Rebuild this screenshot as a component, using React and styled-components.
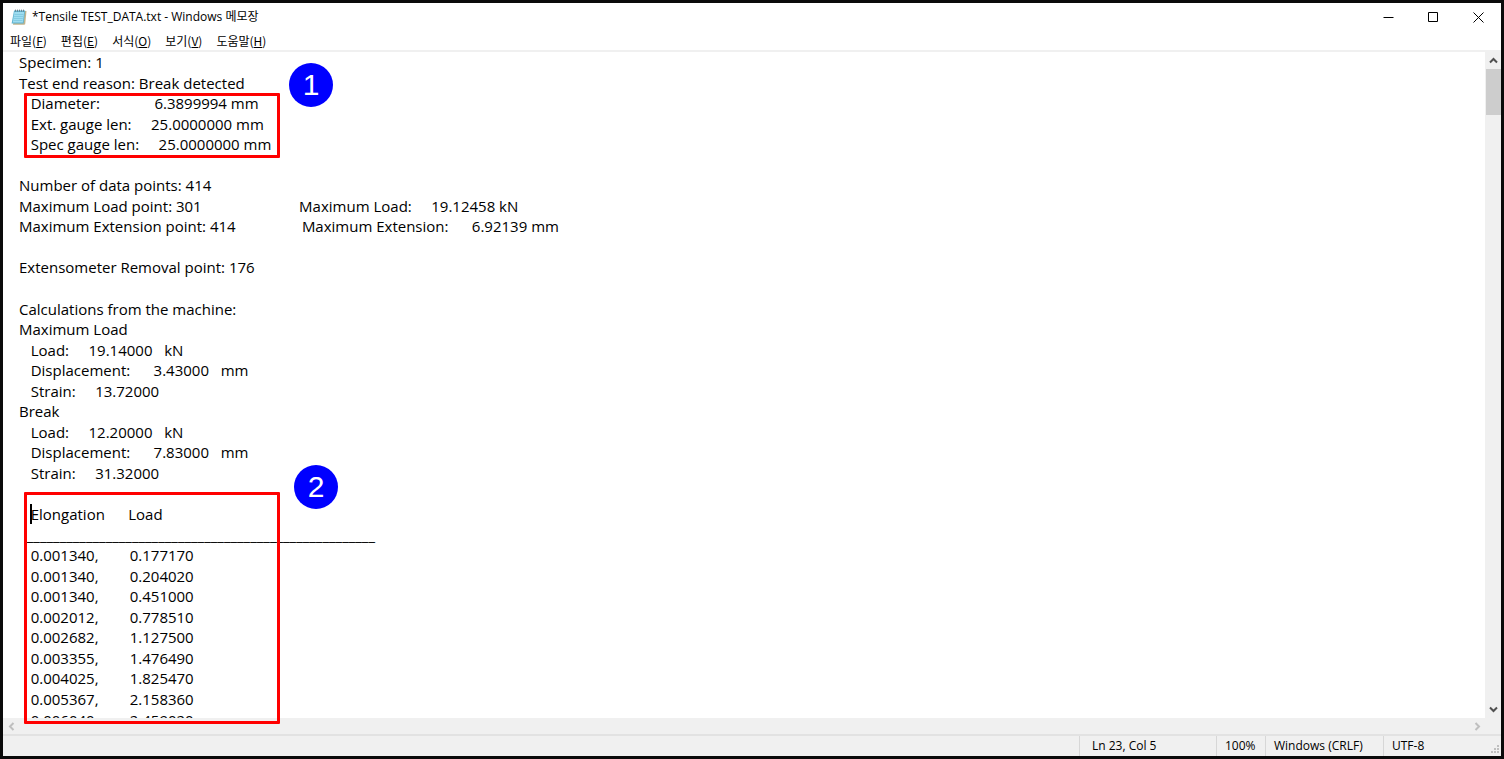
import React, { useState } from 'react';
import styled, { createGlobalStyle } from 'styled-components';

const GlobalStyle = createGlobalStyle`
	* {
		box-sizing: border-box;
	}

	body {
		margin: 0;
		font-family: 'Open Sans', 'Noto Sans CJK KR', sans-serif;
		font-size: 12px;
		color: #000;
	}

	button,
	textarea {
		font: inherit;
		color: inherit;
		border: none;
		margin: 0;
		padding: 0;
		background: none;
	}
`;

const Window = styled.div`
	position: relative;
	display: flex;
	flex-direction: column;
	height: 100vh;
	border: 3px solid #0a0a0a;
	background-color: #fff;
	overflow: hidden;
`;

const TitleBar = styled.header`
	display: flex;
	align-items: center;
	height: 28px;
	padding-left: 8px;
`;

const Title = styled.h1`
	flex: 1;
	margin: 0 0 0 5px;
	font-size: 12px;
	line-height: 16px;
	font-weight: 400;
`;

const WindowButton = styled.button`
	display: flex;
	align-items: center;
	justify-content: center;
	width: 45px;
	height: 28px;
`;

const MenuBar = styled.nav`
	display: flex;
	align-items: center;
	gap: 14px;
	height: 19px;
	padding-left: 7px;
	font-family: 'Noto Sans CJK KR', sans-serif;
`;

const MenuButton = styled.button`
	line-height: 16px;
	white-space: nowrap;
`;

const Main = styled.main`
	flex: 1;
	display: grid;
	grid-template-columns: 1fr 16px;
	grid-template-rows: 1fr 16px;
	min-height: 0;
	border-top: 2px solid #f0f0f0;
	background-color: #f0f0f0;
`;

const Editor = styled.textarea`
	width: 100%;
	height: 100%;
	padding: 0 0 0 16px;
	outline: none;
	resize: none;
	overflow: hidden;
	white-space: pre;
	background-color: #fff;
	font-size: 15px;
	line-height: 1.37;
`;

const VerticalBar = styled.div`
	display: flex;
	flex-direction: column;
	align-items: center;
`;

const HorizontalBar = styled.div`
	display: flex;
	justify-content: space-between;
`;

const ScrollButton = styled.button`
	display: flex;
	align-items: center;
	justify-content: center;
	width: 16px;
	height: 17px;
	color: ${(props) => (props.disabled ? '#bfbfbf' : '#505050')};
`;

const Thumb = styled.div`
	width: 15px;
	height: 46px;
	margin-bottom: auto;
	background-color: #cdcdcd;
`;

const StatusBar = styled.footer`
	position: relative;
	display: flex;
	justify-content: flex-end;
	height: 22px;
	border-top: 2px solid #e2e2e2;
	background-color: #f0f0f0;
`;

const StatusCell = styled.span`
	width: ${(props) => props.$width}px;
	padding-left: ${(props) => props.$indent || 8}px;
	border-left: 1px solid #d7d7d7;
	line-height: 20px;
	white-space: nowrap;
`;

const Grip = styled.svg`
	position: absolute;
	right: 1px;
	bottom: 2px;
`;

const Caret = styled.span`
	position: absolute;
	left: 27px;
	top: 501px;
	width: 2px;
	height: 20px;
	background-color: #000;
`;

const Highlight = styled.div`
	position: absolute;
	left: 21px;
	top: ${(props) => props.$top}px;
	width: 256px;
	height: ${(props) => props.$height}px;
	border: 3px solid #f00;
	border-radius: 1px;
	pointer-events: none;
`;

const Marker = styled.div`
	position: absolute;
	left: ${(props) => props.$left}px;
	top: ${(props) => props.$top}px;
	width: 44px;
	height: 44px;
	border-radius: 50%;
	background-color: #00f;
	color: #fff;
	font-family: 'Liberation Sans', sans-serif;
	font-size: 30px;
	line-height: 44px;
	text-align: center;
`;

const menus = [
	{ label: '파일', mnemonic: 'F' },
	{ label: '편집', mnemonic: 'E' },
	{ label: '서식', mnemonic: 'O' },
	{ label: '보기', mnemonic: 'V' },
	{ label: '도움말', mnemonic: 'H' },
];

const fileText = [
	'Specimen: 1',
	'Test end reason: Break detected',
	'   Diameter:              6.3899994 mm',
	'   Ext. gauge len:     25.0000000 mm',
	'   Spec gauge len:     25.0000000 mm',
	'',
	'Number of data points: 414',
	'Maximum Load point: 301                         Maximum Load:     19.12458 kN',
	'Maximum Extension point: 414                 Maximum Extension:      6.92139 mm',
	'',
	'Extensometer Removal point: 176',
	'',
	'Calculations from the machine:',
	'Maximum Load',
	'   Load:     19.14000   kN',
	'   Displacement:      3.43000   mm',
	'   Strain:     13.72000',
	'Break',
	'   Load:     12.20000   kN',
	'   Displacement:      7.83000   mm',
	'   Strain:     31.32000',
	'',
	'   Elongation      Load',
	'  ' + '_'.repeat(53),
	'   0.001340,        0.177170',
	'   0.001340,        0.204020',
	'   0.001340,        0.451000',
	'   0.002012,        0.778510',
	'   0.002682,        1.127500',
	'   0.003355,        1.476490',
	'   0.004025,        1.825470',
	'   0.005367,        2.158360',
	'   0.006040,        2.459020',
].join('\n');

const NotepadIcon = () => (
	<svg width='16' height='16' viewBox='0 0 16 16' aria-hidden='true'>
		<path d='M4 2h11.5l-1.3 13.2-1 .6H2z' fill='#c2b48d' />
		<path d='M3 1.5h11.2L12.6 14.6H.6z' fill='#5fb3d0' />
		<path d='M3.4 3h9.8L11.9 13.6H1.8z' fill='#9ddcf0' />
		<path
			d='M3.4 5.5h9M3.1 7.5h9M2.8 9.5h9M2.4 11.5h9'
			stroke='#72bfd8'
			strokeWidth='0.6'
		/>
		<path
			d='M4.5 .6v2M6.5 .6v2M8.5 .6v2M10.5 .6v2M12.5 .6v2'
			stroke='#5d6f78'
			strokeWidth='0.8'
		/>
	</svg>
);

const Arrow = ({ d }) => (
	<svg width='9' height='9' viewBox='0 0 9 9' aria-hidden='true'>
		<path d={d} fill='none' stroke='currentColor' strokeWidth='2' />
	</svg>
);

const WindowIcon = ({ d }) => (
	<svg width='11' height='11' viewBox='0 0 11 11' aria-hidden='true'>
		<path d={d} fill='none' stroke='#000' />
	</svg>
);

function App() {
	const [text, setText] = useState(fileText);

	return (
		<>
			<GlobalStyle />
			<Window>
				<TitleBar>
					<NotepadIcon />
					<Title>*Tensile TEST_DATA.txt - Windows 메모장</Title>
					<WindowButton aria-label='Minimize'>
						<WindowIcon d='M0.5 5.5h10' />
					</WindowButton>
					<WindowButton aria-label='Maximize'>
						<WindowIcon d='M0.5 0.5h9v9h-9z' />
					</WindowButton>
					<WindowButton aria-label='Close'>
						<WindowIcon d='M0.5 0.5l10 10M10.5 0.5l-10 10' />
					</WindowButton>
				</TitleBar>
				<MenuBar>
					{menus.map((menu) => (
						<MenuButton key={menu.mnemonic}>
							{menu.label}(<u>{menu.mnemonic}</u>)
						</MenuButton>
					))}
				</MenuBar>
				<Main>
					<Editor
						aria-label='Text editor'
						wrap='off'
						spellCheck={false}
						value={text}
						onChange={(e) => setText(e.target.value)}
					/>
					<VerticalBar>
						<ScrollButton aria-label='Scroll up'>
							<Arrow d='M1 6.5L4.5 3L8 6.5' />
						</ScrollButton>
						<Thumb />
						<ScrollButton aria-label='Scroll down'>
							<Arrow d='M1 2.5L4.5 6L8 2.5' />
						</ScrollButton>
					</VerticalBar>
					<HorizontalBar>
						<ScrollButton aria-label='Scroll left' disabled>
							<Arrow d='M6.5 1L3 4.5L6.5 8' />
						</ScrollButton>
						<ScrollButton aria-label='Scroll right' disabled>
							<Arrow d='M2.5 1L6 4.5L2.5 8' />
						</ScrollButton>
					</HorizontalBar>
				</Main>
				<StatusBar>
					<StatusCell $width={137} $indent={12}>
						Ln 23, Col 5
					</StatusCell>
					<StatusCell $width={49}>100%</StatusCell>
					<StatusCell $width={118}>Windows (CRLF)</StatusCell>
					<StatusCell $width={118}>UTF-8</StatusCell>
					<Grip width='9' height='9' viewBox='0 0 9 9' aria-hidden='true'>
						<path
							d='M6 0h2v2h-2zM3 3h2v2h-2zM6 3h2v2h-2zM0 6h2v2h-2zM3 6h2v2h-2zM6 6h2v2h-2z'
							fill='#bfbfbf'
						/>
					</Grip>
				</StatusBar>
				<Caret />
				<Highlight $top={90} $height={65} />
				<Highlight $top={489} $height={232} />
				<Marker $left={286} $top={60}>
					1
				</Marker>
				<Marker $left={291} $top={462}>
					2
				</Marker>
			</Window>
		</>
	);
}

export default App;
